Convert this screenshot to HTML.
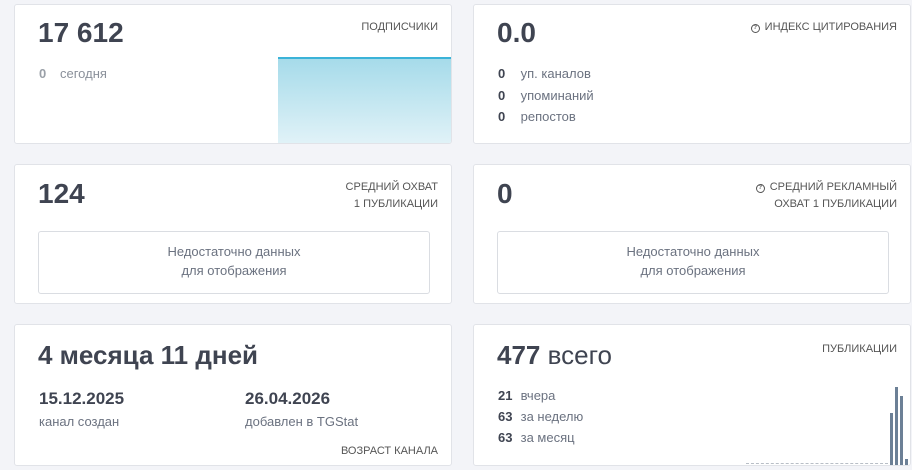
<!DOCTYPE html>
<html><head><meta charset="utf-8"><style>
body{margin:0;width:912px;height:470px;background:#f3f4f8;font-family:"Liberation Sans",sans-serif;color:#3d4450;position:relative;overflow:hidden}
.c{position:absolute;background:#fff;border:1px solid #e1e3e8;border-radius:3px;box-sizing:border-box;overflow:hidden}
.big{position:absolute;font-size:28px;font-weight:bold;color:#3f4451}
.lbl{position:absolute;right:13px;font-size:11px;color:#555;text-align:right;line-height:17px;text-transform:uppercase}
.row{position:absolute;font-size:13px;color:#6b7280}
.row b{display:inline-block;width:19px;color:#3f4451}
.nd{position:absolute;border:1px solid #dadde2;border-radius:3px;text-align:center;font-size:13px;color:#6b7280;line-height:19px;box-sizing:border-box;padding-top:10px}
.q{display:inline-block;width:7px;height:7px;border:1.3px solid #555;border-radius:50%;font-size:6px;line-height:7px;text-align:center;margin-right:5px;vertical-align:1px;font-weight:bold}
</style></head><body>
<div class="c" style="left:14px;top:4px;width:438px;height:140px">
 <div class="big" style="left:23px;top:12px">17 612</div>
 <div class="lbl" style="top:14px">Подписчики</div>
 <div class="row" style="left:24px;top:61px;color:#8a909a"><b style="color:#9aa0a8;width:21px">0</b>сегодня</div>
 <div style="position:absolute;left:263px;top:52px;width:174px;height:88px;border-top:2px solid #3bb3d8;background:linear-gradient(#a6dbea,#e3f3f8)"></div>
</div>
<div class="c" style="left:473px;top:4px;width:438px;height:140px">
 <div class="big" style="left:23px;top:12px">0.0</div>
 <div class="lbl" style="top:14px"><span class="q">?</span>Индекс цитирования</div>
 <div class="row" style="left:24px;top:61px"><b>0</b> уп. каналов</div>
 <div class="row" style="left:24px;top:83px"><b>0</b> упоминаний</div>
 <div class="row" style="left:24px;top:104px"><b>0</b> репостов</div>
</div>
<div class="c" style="left:14px;top:164px;width:438px;height:140px">
 <div class="big" style="left:23px;top:13px">124</div>
 <div class="lbl" style="top:14px">Средний охват<br>1 публикации</div>
 <div class="nd" style="left:23px;top:66px;width:392px;height:63px">Недостаточно данных<br>для отображения</div>
</div>
<div class="c" style="left:473px;top:164px;width:438px;height:140px">
 <div class="big" style="left:23px;top:13px">0</div>
 <div class="lbl" style="top:14px"><span class="q">?</span>Средний рекламный<br>охват 1 публикации</div>
 <div class="nd" style="left:23px;top:66px;width:392px;height:63px">Недостаточно данных<br>для отображения</div>
</div>
<div class="c" style="left:14px;top:324px;width:438px;height:142px">
 <div class="big" style="left:23px;top:15px;font-size:26px">4 месяца 11 дней</div>
 <div style="position:absolute;left:24px;top:64px;font-size:17px;font-weight:bold;color:#3f4451">15.12.2025</div>
 <div class="row" style="left:24px;top:89px">канал создан</div>
 <div style="position:absolute;left:230px;top:64px;font-size:17px;font-weight:bold;color:#3f4451">26.04.2026</div>
 <div class="row" style="left:230px;top:89px">добавлен в TGStat</div>
 <div class="lbl" style="top:118px">Возраст канала</div>
</div>
<div class="c" style="left:473px;top:324px;width:438px;height:142px">
 <div class="big" style="left:23px;top:15px;font-size:26px">477 <span style="font-weight:normal">всего</span></div>
 <div class="lbl" style="top:16px">Публикации</div>
 <div class="row" style="left:24px;top:63px"><b>21</b> вчера</div>
 <div class="row" style="left:24px;top:84px"><b>63</b> за неделю</div>
 <div class="row" style="left:24px;top:105px"><b>63</b> за месяц</div>
 <div style="position:absolute;left:272px;top:138px;width:142px;border-top:1px dashed #b8bec6"></div>
 <div style="position:absolute;left:416px;top:88px;width:3px;height:54px;background:#6c8096"></div>
 <div style="position:absolute;left:421px;top:62px;width:3px;height:80px;background:#6c8096"></div>
 <div style="position:absolute;left:426px;top:71px;width:3px;height:71px;background:#6c8096"></div>
 <div style="position:absolute;left:431px;top:134px;width:3px;height:8px;background:#6c8096"></div>
</div>
</body></html>
